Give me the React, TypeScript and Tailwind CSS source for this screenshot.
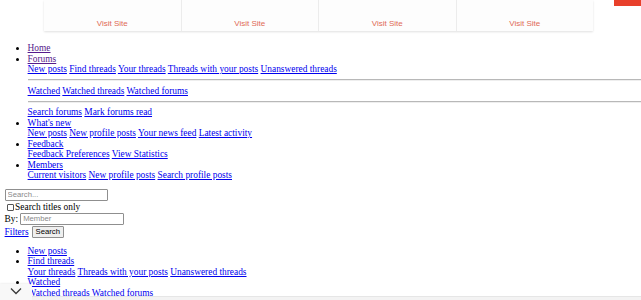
const serif = "font-['Liberation_Serif','Times_New_Roman',serif]"
const sans = "font-['Liberation_Sans',Arial,sans-serif]"

function L({ children, visited }: { children: string; visited?: boolean }) {
  return (
    <a href="#" className={visited ? "text-[#551a8b] underline" : "text-[#0000ee] underline"}>
      {children}
    </a>
  )
}

function Row({ items }: { items: string[] }) {
  return (
    <div className="whitespace-nowrap">
      {items.map((t, i) => (
        <span key={t}>
          {i > 0 && " "}
          <L>{t}</L>
        </span>
      ))}
    </div>
  )
}

function Rule() {
  return <div className="my-[4.6px] h-[2px] border-t border-[#b8b8b8] bg-[#eeeeee]" />
}

function App() {
  return (
    <div className={`${serif} relative h-[300px] overflow-hidden bg-white text-[9.4px] leading-[10.5px] text-black`}>
      {/* top cards */}
      <div className="flex h-[31px]">
        <div className="ml-[44px] flex w-[549px] shadow-[0_1px_2px_rgba(0,0,0,0.12)]">
          {[0, 1, 2, 3].map((i) => (
            <div
              key={i}
              className={`flex flex-1 items-end justify-center border-[#ececec] bg-[#fdfdfd] pb-[3px] ${i > 0 ? "border-l" : ""}`}
            >
              <span className={`${sans} text-[8px] leading-[8px] text-[#e06a55]`}>Visit Site</span>
            </div>
          ))}
        </div>
        <div className="ml-auto h-[6px] w-[27px] bg-[#e8402b]" />
      </div>

      <div className="pl-[4.6px]">
        <ul className="mt-[12px] mb-[8px] list-disc pl-[23px]">
          <li><L visited>Home</L></li>
          <li>
            <L visited>Forums</L>
            <Row items={["New posts", "Find threads", "Your threads", "Threads with your posts", "Unanswered threads"]} />
            <Rule />
            <Row items={["Watched", "Watched threads", "Watched forums"]} />
            <Rule />
            <Row items={["Search forums", "Mark forums read"]} />
          </li>
          <li>
            <L>What's new</L>
            <Row items={["New posts", "New profile posts", "Your news feed", "Latest activity"]} />
          </li>
          <li>
            <L>Feedback</L>
            <Row items={["Feedback Preferences", "View Statistics"]} />
          </li>
          <li>
            <L>Members</L>
            <Row items={["Current visitors", "New profile posts", "Search profile posts"]} />
          </li>
        </ul>

        <form className="flex flex-col items-start">
          <input
            placeholder="Search..."
            className={`${sans} h-[12px] w-[103px] rounded-[1px] border border-[#8f8f8f] px-[2px] text-[7.7px] placeholder:text-[#8a8a8a]`}
          />
          <label className="mt-[1px] flex h-[11px] items-center">
            <span className="ml-[2px] mr-[1px] inline-block h-[7.5px] w-[7.5px] rounded-[1px] border border-[#555]" />
            Search titles only
          </label>
          <div className="flex h-[12px] items-center">
            By:
            <input
              placeholder="Member"
              className={`${sans} ml-[2px] h-[12px] w-[104px] rounded-[1px] border border-[#8f8f8f] px-[2px] text-[7.7px] placeholder:text-[#8a8a8a]`}
            />
          </div>
          <div className="mt-[1px] flex h-[12px] items-center">
            <L>Filters</L>
            <span
              className={`${sans} ml-[3px] flex h-[12px] items-center rounded-[1px] border border-[#8f8f8f] bg-[#efefef] px-[3px] text-[7.7px]`}
            >
              Search
            </span>
          </div>
        </form>

        <ul className="mt-[8px] list-disc pl-[23px]">
          <li><L>New posts</L></li>
          <li>
            <L>Find threads</L>
            <Row items={["Your threads", "Threads with your posts", "Unanswered threads"]} />
          </li>
          <li>
            <L>Watched</L>
            <Row items={["Watched threads", "Watched forums"]} />
          </li>
        </ul>
      </div>

      {/* bottom overlay */}
      <div className="absolute inset-x-0 bottom-0 h-[4px] border-t border-[#e6e6e6] bg-[#f3f3f3]" />
      <div className="absolute bottom-0 left-0 flex h-[16px] w-[32px] items-start justify-center rounded-tr-[3px] bg-[#f8f8f8] pt-[3px] shadow-[0_-1px_2px_rgba(0,0,0,0.06)]">
        <svg width="12" height="8" viewBox="0 0 12 8" fill="none">
          <polyline points="1,1.5 6,6.5 11,1.5" stroke="#3a3a3a" strokeWidth="1.3" />
        </svg>
      </div>
    </div>
  )
}

export default App
